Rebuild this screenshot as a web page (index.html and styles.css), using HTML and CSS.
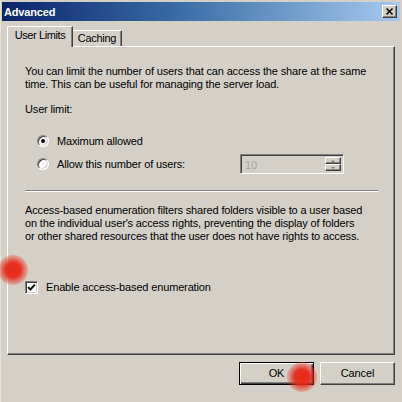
FILE: index.html
```html
<!DOCTYPE html>
<html>
<head>
<meta charset="utf-8">
<link rel="stylesheet" href="styles.css">
</head>
<body>
<div class="window">
  <div class="titlebar">
    <span class="title">Advanced</span>
    <span class="close"><svg width="13" height="11" viewBox="0 0 13 11"><path d="M3.5 2.5L9.5 8.5M9.5 2.5L3.5 8.5" stroke="#000" stroke-width="1.7" fill="none"/></svg></span>
  </div>
  <div class="content">
    <div class="tabs">
      <div class="tab active">User Limits</div>
      <div class="tab">Caching</div>
    </div>
    <div class="panel">
      <p class="text">You can limit the number of users that can access the share at the same<br>time. This can be useful for managing the server load.</p>
      <div class="group-label">User limit:</div>
      <div class="options">
        <div class="option">
          <span class="radio checked"></span>
          <span class="opt-label">Maximum allowed</span>
        </div>
        <div class="option">
          <span class="radio"></span>
          <span class="opt-label">Allow this number of users:</span>
          <div class="spinner">
            <span class="spin-value">10</span>
            <span class="spin-buttons">
              <span class="spin-btn"><span class="arrow-up"></span></span>
              <span class="spin-btn"><span class="arrow-down"></span></span>
            </span>
          </div>
        </div>
      </div>
      <div class="separator"></div>
      <p class="text second">Access-based enumeration filters shared folders visible to a user based<br>on the individual user's access rights, preventing the display of folders<br>or other shared resources that the user does not have rights to access.</p>
      <div class="check-row">
        <span class="checkbox"><svg width="9" height="9" viewBox="0 0 9 9"><path d="M1.2 4.2L3.4 6.6L7.8 1.6" stroke="#000" stroke-width="1.9" fill="none"/></svg></span>
        <span class="check-label">Enable access-based enumeration</span>
      </div>
    </div>
    <div class="buttons">
      <span class="btn default">OK</span>
      <span class="btn">Cancel</span>
    </div>
  </div>
  <span class="touch touch-a"></span>
  <span class="touch touch-b"></span>
</div>
</body>
</html>
```
FILE: styles.css
```css
* { box-sizing: border-box; }
html, body { margin: 0; padding: 0; }
body {
  width: 402px;
  height: 402px;
  overflow: hidden;
  background: #d4d0c8;
  font-family: "Liberation Sans", Arial, sans-serif;
  font-size: 11px;
  letter-spacing: -0.15px;
  color: #000;
}
.window {
  position: relative;
  width: 402px;
  height: 402px;
  background: #d4d0c8;
  padding: 2px 2px 0 2px;
  display: flex;
  flex-direction: column;
  border-left: 1px solid #e4e2dc;
}
.titlebar {
  height: 19px;
  margin-left: -1px;
  background: linear-gradient(to right, #0a246a 0%, #3a6ea5 45%, #a6caf0 100%);
  display: flex;
  align-items: center;
  justify-content: space-between;
  padding: 0 3px 0 2px;
}
.title {
  color: #fff;
  font-weight: bold;
  line-height: 13px;
  padding-top: 1px;
}
.close {
  width: 15px;
  height: 13px;
  background: #d4d0c8;
  border-top: 1px solid #fff;
  border-left: 1px solid #fff;
  border-right: 1px solid #404040;
  border-bottom: 1px solid #404040;
  box-shadow: inset -1px -1px 0 #808080;
  display: flex;
}
.content {
  flex: 1;
  padding: 5px 5px 0 4px;
  display: flex;
  flex-direction: column;
}
.tabs {
  height: 20px;
  display: flex;
  align-items: flex-end;
}
.tab {
  background: #d4d0c8;
  line-height: 13px;
  text-align: center;
  border-top: 1px solid #fff;
  border-left: 1px solid #fff;
  border-right: 1px solid #404040;
  box-shadow: inset -1px 0 0 #808080;
}
.tab.active {
  position: relative;
  z-index: 1;
  width: 66px;
  height: 21px;
  margin-bottom: -1px;
  padding-top: 2px;
  letter-spacing: -0.4px;
}
.tab:not(.active) {
  width: 49px;
  height: 16px;
  padding-top: 1px;
  border-left: none;
  letter-spacing: -0.3px;
}
.panel {
  height: 309px;
  border-top: 1px solid #fff;
  border-left: 1px solid #fff;
  border-right: 1px solid #404040;
  border-bottom: 1px solid #404040;
  box-shadow: inset -1px -1px 0 #808080;
  padding: 18px 16px 0 17px;
  display: flex;
  flex-direction: column;
}
.text {
  margin: 0;
  line-height: 13px;
  white-space: nowrap;
}
.text.second { margin-top: 12px; }
.group-label {
  margin-top: 12px;
  line-height: 13px;
}
.options {
  margin-top: 15px;
  display: flex;
  flex-direction: column;
  gap: 3px;
}
.option {
  height: 20px;
  display: flex;
  align-items: center;
  line-height: 13px;
}
.radio {
  width: 12px;
  height: 12px;
  margin-left: 12px;
  margin-right: 8px;
  border-radius: 50%;
  background: #fff;
  border: 1px solid;
  border-color: #808080 #fff #fff #808080;
  box-shadow: inset 1px 1px 0 #404040, inset -1px -1px 0 #d4d0c8;
  display: flex;
  align-items: center;
  justify-content: center;
}
.radio.checked::after {
  content: "";
  width: 4px;
  height: 4px;
  border-radius: 50%;
  background: #000;
}
.opt-label { white-space: nowrap; }
.option .radio + .opt-label + .spinner { margin-left: auto; }
.opt-label:not(:last-child) { width: 182px; }
.spinner {
  width: 104px;
  height: 20px;
  margin-right: 34px;
  background: #d4d0c8;
  border-top: 1px solid #808080;
  border-left: 1px solid #808080;
  border-right: 1px solid #fff;
  border-bottom: 1px solid #fff;
  box-shadow: inset 1px 1px 0 #404040, inset -1px -1px 0 #d4d0c8;
  display: flex;
  align-items: stretch;
  padding: 2px;
}
.spin-value {
  flex: 1;
  color: #a8a6a0;
  line-height: 14px;
  padding-left: 2px;
  padding-top: 1px;
}
.spin-buttons {
  width: 16px;
  display: flex;
  flex-direction: column;
}
.spin-btn {
  flex: 1;
  background: #d4d0c8;
  border-top: 1px solid #fff;
  border-left: 1px solid #fff;
  border-right: 1px solid #404040;
  border-bottom: 1px solid #404040;
  box-shadow: inset -1px -1px 0 #808080;
  display: flex;
  align-items: center;
  justify-content: center;
}
.arrow-up {
  width: 0;
  height: 0;
  border-left: 2px solid transparent;
  border-right: 2px solid transparent;
  border-bottom: 2px solid #808080;
}
.arrow-down {
  width: 0;
  height: 0;
  border-left: 2px solid transparent;
  border-right: 2px solid transparent;
  border-top: 2px solid #808080;
}
.separator {
  margin-top: 16px;
  height: 2px;
  border-top: 1px solid #808080;
  border-bottom: 1px solid #fff;
}
.check-row {
  margin-top: 38px;
  display: flex;
  align-items: center;
  line-height: 13px;
}
.checkbox {
  width: 13px;
  height: 13px;
  margin-right: 8px;
  background: #fff;
  border: 1px solid;
  border-color: #808080 #fff #fff #808080;
  box-shadow: inset 1px 1px 0 #404040, inset -1px -1px 0 #d4d0c8;
  display: flex;
  align-items: center;
  justify-content: center;
}
.buttons {
  margin-top: 7px;
  display: flex;
  justify-content: flex-end;
  gap: 6px;
}
.btn {
  width: 75px;
  height: 23px;
  display: flex;
  align-items: center;
  justify-content: center;
  background: #d4d0c8;
  border-top: 1px solid #fff;
  border-left: 1px solid #fff;
  border-right: 1px solid #404040;
  border-bottom: 1px solid #404040;
  box-shadow: inset -1px -1px 0 #808080;
  line-height: 13px;
}
.btn.default {
  border: 1px solid #000;
  box-shadow: inset 1px 1px 0 #fff, inset -1px -1px 0 #404040, inset -2px -2px 0 #808080;
}
.touch {
  position: absolute;
  width: 30px;
  height: 30px;
  border-radius: 50%;
  background: radial-gradient(circle, rgba(232,40,24,1) 0%, rgba(232,40,24,0.95) 35%, rgba(232,60,40,0.35) 65%, rgba(232,60,40,0) 100%);
}
.touch-a { left: -3px; top: 255px; }
.touch-b { left: 286px; top: 362px; }
```
